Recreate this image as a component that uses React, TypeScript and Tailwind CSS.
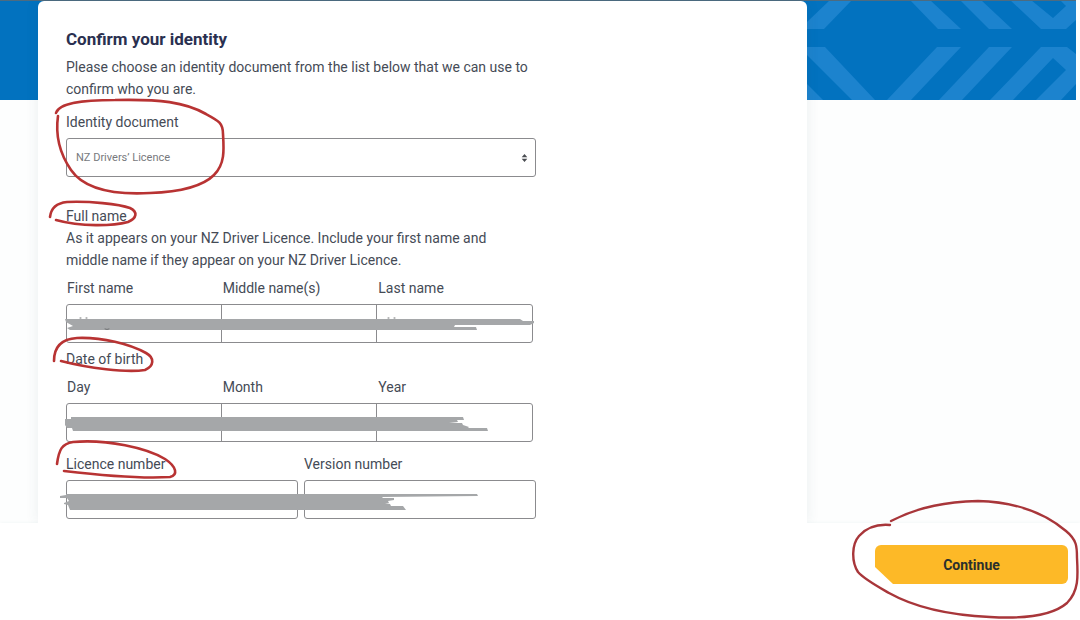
import { useState } from "react";

const nameFields = [
  { id: "first-name", label: "First name" },
  { id: "middle-name", label: "Middle name(s)" },
  { id: "last-name", label: "Last name" },
];

const birthFields = [
  { id: "day", label: "Day" },
  { id: "month", label: "Month" },
  { id: "year", label: "Year" },
];

const licenceFields = [
  { id: "licence-number", label: "Licence number" },
  { id: "version-number", label: "Version number" },
];

type Field = { id: string; label: string };

// three inputs that share one rounded border
const JoinedFields = ({ fields }: { fields: Field[] }) => {
  return (
    <div className="mt-1.5 pr-[3px]">
      <div className="grid grid-cols-3">
        {fields.map((field) => (
          <label key={field.id} htmlFor={field.id} className="pl-px">
            {field.label}
          </label>
        ))}
      </div>
      <div className="mt-[5px] grid h-[39px] grid-cols-3 divide-x divide-[#8b8b8e] rounded-[3px] border border-[#8b8b8e]">
        {fields.map((field) => (
          <input
            key={field.id}
            id={field.id}
            type="text"
            className="min-w-0 bg-transparent px-2 outline-none"
          />
        ))}
      </div>
    </div>
  );
};

const BannerPattern = () => {
  return (
    <svg
      width="269"
      height="100"
      viewBox="807 1 269 100"
      fill="#1c83ce"
      aria-hidden="true"
    >
      <path d="M830 0H852L824 29H807V22Z" />
      <path d="M910 0H930L961 29H938Z" />
      <path d="M960 0H981L1012 29H989Z" />
      <path d="M1010 0H1031L1053 18L1066 6L1060 0H1076V20L1066 29H1041Z" />
      <path d="M807 47H825L875 100H852L807 55Z" />
      <path d="M807 84L823 100H807Z" />
      <path d="M937 47H961L911 100H887Z" />
      <path d="M989 47H1012L962 100H939Z" />
      <path d="M1041 47H1067L1076 54V84L1061 100H1036L1066 70L1053 58L1013 100H990Z" />
    </svg>
  );
};

const CardMarks = () => {
  return (
    <svg
      className="pointer-events-none absolute left-0 top-0 overflow-visible"
      width="769"
      height="523"
      viewBox="38 1 769 523"
      fill="none"
      strokeLinecap="round"
      strokeLinejoin="round"
      aria-hidden="true"
    >
      <g fill="#a5a7a9">
        <path d="M65 319H520L523 321H534V323L530 325H455L454 327H476L477 330H70L67 328L73 326L66 322Z" />
        <path d="M71 417H463L464 420H457L458 422L449 423H462L463 425L469 427L468 428H487L488 431H73L72 428H67L65 425V419H71Z" />
        <path d="M60 496L66 495V494H477L478 496L382 497L383 498H394V500L388 501L389 503H385L390 504L391 506H403L406 510H70L68 505L64 504V503L69 501L67 498H60Z" />
      </g>
      <g stroke="#6f7173" strokeWidth="1">
        <path d="M80 318h1M86 318h1M105 329q2 1 4 0M388 318h1M394 318h1" />
      </g>
      <g stroke="#b83333" strokeWidth="2.6">
        <path d="M56 113C59 103 82 100 115 100C160 99 185 102 206 114C219 121 223 123 223 134C224 150 225 164 214 175C202 187 179 192 150 193C113 195 84 189 71 170C60 154 55 137 58 116" />
        <path d="M50 217C51 208 57 203 67 202C89 201 119 204 130 208C138 212 137 218 128 222C113 226 81 227 56 220" />
        <path d="M54 361C54 347 61 339 77 338C102 337 130 344 146 353C155 358 154 366 145 370C126 373 88 368 61 361" />
        <path d="M57 464C59 449 62 444 73 442C107 439 147 448 165 459C177 467 178 475 170 477C139 479 98 475 64 471" />
      </g>
    </svg>
  );
};

const ContinueMark = () => {
  return (
    <svg
      className="pointer-events-none absolute -left-[23px] -top-[45px] overflow-visible"
      width="228"
      height="120"
      viewBox="852 500 228 120"
      fill="none"
      stroke="#a8363a"
      strokeWidth="2.4"
      strokeLinecap="round"
      aria-hidden="true"
    >
      <path d="M891 521C920 506 948 502 978 501C1019 502 1046 514 1066 531C1077 540 1077 547 1077 558C1078 576 1079 591 1067 603C1052 616 1024 619 990 617C946 615 914 607 889 593C875 585 864 579 858 572C851 561 852 544 859 536C867 527 878 524 890 525" />
    </svg>
  );
};

const App = () => {
  const [document, setDocument] = useState("licence");

  return (
    <div className="min-h-screen bg-white font-[Roboto,sans-serif] text-sm leading-[22px] text-[#454b56]">
      <main className="grid overflow-hidden bg-[#fdfefe]">
        <div className="col-start-1 row-start-1 mr-1 flex h-[100px] justify-end self-start overflow-hidden border-t border-[#4d6b80] bg-[#0272bf]">
          <BannerPattern />
        </div>

        <section className="relative col-start-1 row-start-1 ml-[38px] mt-px max-w-[769px] rounded-t-md bg-white px-7 pb-1 pt-[27px] shadow-[0_0_14px_rgba(40,80,90,0.09)]">
          <form id="identity" className="max-w-[470px]">
            <h1 className="text-[17px] leading-[22px] font-bold text-[#2a3050]">
              Confirm your identity
            </h1>
            <p className="mt-1.5">
              Please choose an identity document from the list below that we can
              use to confirm who you are.
            </p>

            <label htmlFor="document" className="mt-[11px] block">
              Identity document
            </label>
            <div className="relative mt-[5px]">
              <select
                id="document"
                value={document}
                onChange={(e) => setDocument(e.target.value)}
                className="block h-[39px] w-full appearance-none rounded-[3px] border border-[#8b8b8e] bg-white pl-[9px] pr-8 text-[11px] text-[#77797d]"
              >
                <option value="licence">NZ Drivers’ Licence</option>
                <option value="passport">NZ Passport</option>
              </select>
              <svg
                className="pointer-events-none absolute right-2 top-4"
                width="7"
                height="8"
                viewBox="0 0 7 8"
                fill="#4a4d52"
                aria-hidden="true"
              >
                <path d="M3.5 0L6.3 3.2H.7ZM3.5 8L.7 4.8H6.3Z" />
              </svg>
            </div>

            <h2 className="mt-7">Full name</h2>
            <p>
              As it appears on your NZ Driver Licence. Include your first name and
              <br />
              middle name if they appear on your NZ Driver Licence.
            </p>
            <JoinedFields fields={nameFields} />

            <h2 className="mt-[5px]">Date of birth</h2>
            <JoinedFields fields={birthFields} />

            <div className="mt-[11px] grid grid-cols-2 gap-1.5">
              {licenceFields.map((field) => (
                <div key={field.id}>
                  <label htmlFor={field.id} className="block">
                    {field.label}
                  </label>
                  <input
                    id={field.id}
                    type="text"
                    className="mt-[5px] block h-[39px] w-full rounded-[3px] border border-[#8b8b8e] bg-white px-2 outline-none"
                  />
                </div>
              ))}
            </div>
          </form>
          <CardMarks />
        </section>
      </main>

      <footer className="flex justify-end bg-white pb-9 pr-3 pt-[22px] shadow-[0_0_4px_rgba(40,80,90,0.06)]">
        <div className="relative">
          <button
            type="submit"
            form="identity"
            className="block h-[39px] w-[193px] rounded-md bg-[#fdb927] font-bold text-[#2b2f2c] [clip-path:polygon(0_0,100%_0,100%_100%,18px_100%,0_22px)]"
          >
            Continue
          </button>
          <ContinueMark />
        </div>
      </footer>
    </div>
  );
};

export default App;
